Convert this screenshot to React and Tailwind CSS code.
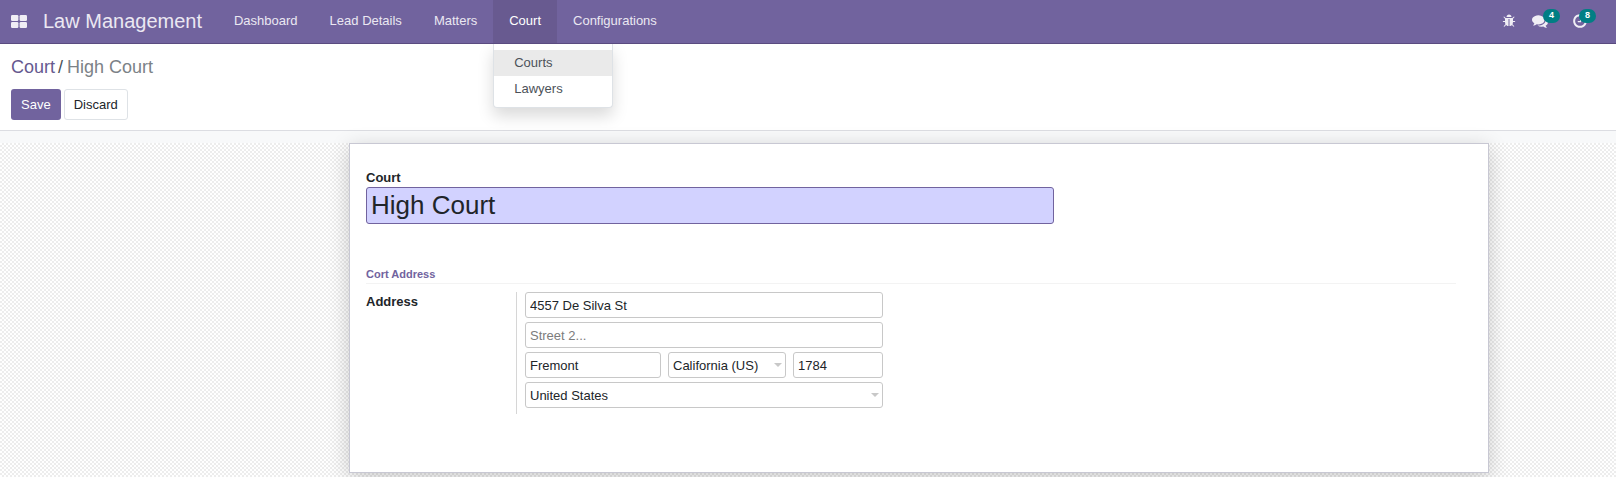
import React from "react";

const ICONS = {
  bug: "M1696 960q0 26-19 45t-45 19h-224q0 171-67 290l208 209q19 19 19 45t-19 45q-18 19-45 19t-45-19l-198-197q-5 5-15 13t-42 28.5-65 36.5-82 29-97 13v-896h-128v896q-51 0-101.5-13.5t-87-33-66-39-43.5-32.5l-15-14-183 207q-20 21-48 21-24 0-43-16-19-18-20.5-44.5t15.5-46.5l202-227q-58-114-58-274h-224q-26 0-45-19t-19-45 19-45 45-19h224v-294l-173-173q-19-19-19-45t19-45 45-19 45 19l173 173h844l173-173q19-19 45-19t45 19 19 45-19 45l-173 173v294h224q26 0 45 19t19 45zm-480-576h-640q0-133 93.5-226.5t226.5-93.5 226.5 93.5 93.5 226.5z",
  comments:
    "M1408 768q0 139-94 257t-256.5 186.5-353.5 68.5q-86 0-176-16-124 88-278 128-36 9-86 16h-3q-11 0-20.5-8t-11.5-21q-1-3-1-6.5t.5-6.5 2-6l2.5-5 3.5-5.5 4-5 4.5-5 4-4.5q5-6 23-25t26-29.5 22.5-29 25-38.5 20.5-44q-124-72-195-177t-71-224q0-139 94-257t256.5-186.5 353.5-68.5 353.5 68.5 256.5 186.5 94 257zm384 256q0 120-71 224.5t-195 176.5q10 24 20.5 44t25 38.5 22.5 29 26 29.5 23 25q1 1 4 4.5t4.5 5 4 5 3.5 5.5l2.5 5 2 6 .5 6.5-1 6.5q-3 14-13 22t-22 7q-50-7-86-16-154-40-278-128-90 16-176 16-271 0-472-132 58 4 88 4 161 0 309-45t264-129q125-92 192-212t67-254q0-77-23-152 129 71 204 178t75 230z",
  clock:
    "M1024 544v448q0 14-9 23t-23 9h-320q-14 0-23-9t-9-23v-64q0-14 9-23t23-9h224v-352q0-14 9-23t23-9h64q14 0 23 9t9 23zm416 352q0-148-73-273t-198-198-273-73-273 73-198 198-73 273 73 273 198 198 273 73 273-73 198-198 73-273zm224 0q0 209-103 385.5t-279.5 279.5-385.5 103-385.5-103-279.5-279.5-103-385.5 103-385.5 279.5-279.5 385.5-103 385.5 103 279.5 279.5 103 385.5z",
};

function Icon({ name, className }) {
  return (
    <svg viewBox="0 0 1792 1792" fill="currentColor" className={className} aria-hidden="true">
      <path d={ICONS[name]} />
    </svg>
  );
}

const BADGE =
  "absolute -top-1 flex h-3.5 items-center justify-center rounded-full bg-[#017e84] px-1.5 text-[9px] font-bold leading-none text-white";

const NAV_ITEM = "flex h-[43px] items-center px-4 pb-0.5 text-[#ebe8f2] hover:bg-[#685a90]";

function NavBar() {
  return (
    <header className="flex h-11 items-center border-b border-[#5a4b80] bg-[#71639e] pl-[11px] pr-4 text-[#f0eef5]">
      <button type="button" aria-label="Apps" className="mr-4">
        <svg viewBox="0 0 16 13" className="h-[13px] w-4" fill="currentColor" aria-hidden="true">
          <rect x="0" y="0" width="7.4" height="6" rx="1.2" />
          <rect x="8.6" y="0" width="7.4" height="6" rx="1.2" />
          <rect x="0" y="7" width="7.4" height="6" rx="1.2" />
          <rect x="8.6" y="7" width="7.4" height="6" rx="1.2" />
        </svg>
      </button>
      <a href="#home" className="pb-0.5 text-xl text-[#ebe8f2]">Law Management</a>
      <nav className="ml-4 flex flex-1">
        <a href="#dashboard" className={NAV_ITEM}>Dashboard</a>
        <a href="#leads" className={NAV_ITEM}>Lead Details</a>
        <a href="#matters" className={NAV_ITEM}>Matters</a>
        <div className="relative">
          <button type="button" aria-expanded="true" className="flex h-[43px] items-center bg-[#685a90] px-4 pb-0.5 text-white">
            Court
          </button>
          <div className="absolute left-0 top-full z-10 mt-px flex w-[120px] flex-col rounded-b border border-t-0 border-[#dee2e6] bg-white pb-[5px] pt-1.5 leading-[26px] text-[#4c5259] shadow-[0_8px_16px_rgba(0,0,0,0.15)] [clip-path:inset(0_-30px_-40px_-30px)]">
            <a href="#courts" className="bg-[#eaeaea] px-5">Courts</a>
            <a href="#lawyers" className="px-5">Lawyers</a>
          </div>
        </div>
        <a href="#config" className={NAV_ITEM}>Configurations</a>
      </nav>
      <div className="flex items-center pb-0.5">
        <button type="button" aria-label="Debug" className="mr-4">
          <Icon name="bug" className="size-3.5" />
        </button>
        <button type="button" aria-label="Messages" className="relative mr-6">
          <Icon name="comments" className="size-4" />
          <span className={`${BADGE} left-[11px]`}>4</span>
        </button>
        <button type="button" aria-label="Activities" className="relative mr-3">
          <Icon name="clock" className="size-4" />
          <span className={`${BADGE} left-[7px]`}>8</span>
        </button>
      </div>
    </header>
  );
}

const FIELD =
  "h-[26px] w-full min-w-0 appearance-none rounded-[3px] border border-[#c8c8c8] bg-white px-1 text-[#212529] outline-none placeholder:text-[#7c7c7c]";

function SelectField({ label, value }) {
  return (
    <div className="relative">
      <select aria-label={label} defaultValue={value} className={`${FIELD} pt-px`}>
        <option>{value}</option>
      </select>
      <svg viewBox="0 0 8 4" className="pointer-events-none absolute right-1 top-[11px] h-1 w-2" aria-hidden="true">
        <path d="M0 0h8L4 4z" fill="#c8c8c8" />
      </svg>
    </div>
  );
}

export default function App() {
  return (
    <div className="flex min-h-screen flex-col bg-[#f8f9fa] font-['Liberation_Sans',Arial,sans-serif] text-[13px] text-[#212529]">
      <NavBar />
      <section className="border-b border-[#dcdde2] bg-white px-[11px] py-2.5">
        <ol className="flex text-lg leading-[27px]">
          <li><a href="#court" className="text-[#66598f]">Court</a></li>
          <li className="text-[#7c8287]"><span className="pl-[3px] pr-1 text-[#495057]">/</span>High Court</li>
        </ol>
        <div className="mt-2 flex gap-[3px]">
          <button type="submit" form="court-form" className="h-[31px] rounded-[3px] bg-[#71639e] px-2.5 text-white">Save</button>
          <button type="button" className="h-[31px] rounded-[3px] border border-[#dee2e6] bg-white px-[9px]">Discard</button>
        </div>
      </section>
      <main className="mt-3 flex flex-1 items-start justify-end bg-[repeating-conic-gradient(#ededed_0_25%,#ffffff_0_50%)] bg-[length:4px_4px] pb-1 pr-[127px]">
        <form
          id="court-form"
          onSubmit={(e) => e.preventDefault()}
          className="w-full max-w-[1140px] border border-[#c8c8d3] bg-white pb-[58px] pl-4 pr-8 pt-6 shadow-[0_5px_20px_rgba(0,0,0,0.2)]"
        >
          <label htmlFor="court" className="block font-bold leading-[19px]">Court</label>
          <input
            id="court"
            defaultValue="High Court"
            className="block h-[37px] w-full max-w-[688px] rounded-[3px] border border-[#71639e] bg-[#d2d2ff] px-1 text-[26px] outline-none"
          />
          <h2 className="mt-[42px] border-b border-[#f3f3f3] text-[11px] font-bold leading-[17px] text-[#71639e]">Cort Address</h2>
          <div className="mt-2 flex">
            <label htmlFor="street" className="w-[150px] font-bold leading-5">Address</label>
            <div className="flex w-[367px] flex-col gap-1 border-l border-[#d6d6d6] pb-1.5 pl-2">
              <input id="street" defaultValue="4557 De Silva St" className={FIELD} />
              <input aria-label="Street 2" placeholder="Street 2..." className={FIELD} />
              <div className="grid grid-cols-[136px_118px_1fr] gap-[7px]">
                <input aria-label="City" defaultValue="Fremont" className={FIELD} />
                <SelectField label="State" value="California (US)" />
                <input aria-label="ZIP" defaultValue="1784" className={FIELD} />
              </div>
              <SelectField label="Country" value="United States" />
            </div>
          </div>
        </form>
      </main>
    </div>
  );
}
